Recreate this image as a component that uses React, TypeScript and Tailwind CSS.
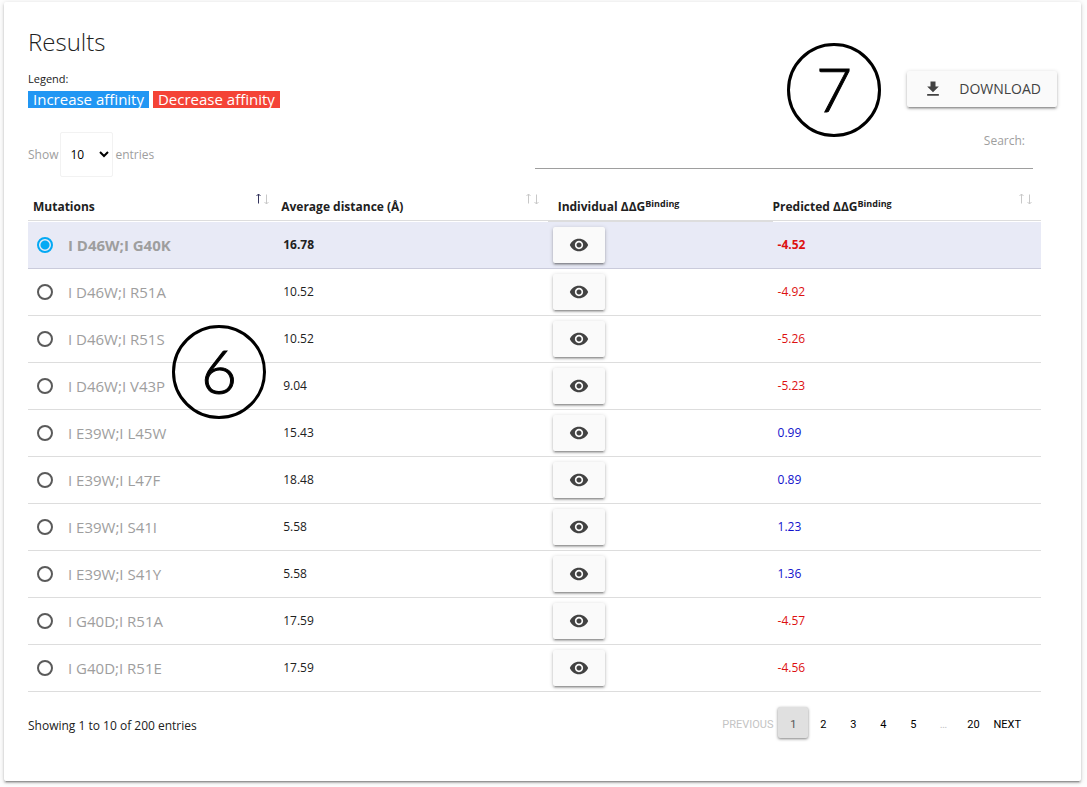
import { useState } from "react";
import { MdRemoveRedEye } from "react-icons/md";

interface Row { name: string; distance: string; predicted: number }

const rows: Row[] = [
  { name: "I D46W;I G40K", distance: "16.78", predicted: -4.52 },
  { name: "I D46W;I R51A", distance: "10.52", predicted: -4.92 },
  { name: "I D46W;I R51S", distance: "10.52", predicted: -5.26 },
  { name: "I D46W;I V43P", distance: "9.04", predicted: -5.23 },
  { name: "I E39W;I L45W", distance: "15.43", predicted: 0.99 },
  { name: "I E39W;I L47F", distance: "18.48", predicted: 0.89 },
  { name: "I E39W;I S41I", distance: "5.58", predicted: 1.23 },
  { name: "I E39W;I S41Y", distance: "5.58", predicted: 1.36 },
  { name: "I G40D;I R51A", distance: "17.59", predicted: -4.57 },
  { name: "I G40D;I R51E", distance: "17.59", predicted: -4.56 },
];

const pages = ["1", "2", "3", "4", "5", "…", "20"];
const raised = "rounded-[2px] bg-[#fafafa] text-[#424242] shadow-[0_2px_2px_0_rgba(0,0,0,0.18),0_3px_1px_-2px_rgba(0,0,0,0.16),0_1px_4px_0_rgba(0,0,0,0.2)]";
const head = "relative border-b border-white pb-[6px] shadow-[inset_0_-1px_#dddddd]";

function SortArrows({ asc }: { asc?: boolean }) {
  return (
    <svg viewBox="0 0 14 12" className="absolute right-[9px] top-[16px] h-3 w-[14px]" fill="none">
      <path d="M3.5 10.5V1M1.5 3 3.5 1l2 2" stroke={asc ? "#33335c" : "#c8c8c8"} />
      <path d="M11.5 1.5V11M9.5 9l2 2 2-2" stroke="#c8c8c8" />
    </svg>
  );
}

function Marker({ n, className }: { n: string; className: string }) {
  return (
    <div className={`pointer-events-none absolute flex h-[94px] w-[94px] items-center justify-center rounded-full border-[3px] border-black pb-[5px] font-['Lato'] text-[62px] font-light leading-none text-black [-webkit-text-stroke:1px_black] ${className}`}>
      {n}
    </div>
  );
}

export default function App() {
  const [selected, setSelected] = useState(0);
  const [page, setPage] = useState("1");
  const [length, setLength] = useState("10");
  const [q, setQ] = useState("");

  return (
    <div className="bg-[#fdfdfd] pb-[6px] pl-1 pr-[6px] pt-[2px] font-['Open_Sans',sans-serif] text-xs text-[#212121]">
      <main className="relative rounded-[2px] bg-white pb-[43px] pl-6 pr-6 pt-6 shadow-[0_2px_2px_0_rgba(0,0,0,0.2),0_3px_1px_-2px_rgba(0,0,0,0.2),0_1px_5px_0_rgba(0,0,0,0.16)]">
        <h1 className="text-2xl font-light leading-8">Results</h1>

        <div className="mt-[13px] flex items-start justify-between">
          <div>
            <p className="text-[11px] leading-4">Legend:</p>
            <div className="mt-1 flex gap-1 text-[15px] leading-[17px] text-white">
              <span className="bg-[#2196f3] px-[5px]">Increase affinity</span>
              <span className="bg-[#f44336] px-[5px]">Decrease affinity</span>
            </div>
          </div>
          <button type="button" className={`flex h-9 items-center gap-4 px-4 text-sm ${raised}`}>
            <svg viewBox="0 0 24 24" className="h-5 w-5" fill="currentColor">
              <path d="M19 9h-4V3H9v6H5l7 7 7-7zM5 18v2h14v-2H5z" />
            </svg>
            DOWNLOAD
          </button>
        </div>

        <div className="mr-4">
          <div className="mt-6 flex items-start justify-between text-[#9e9e9e]">
            <label className="flex items-center gap-[2px]">
              Show
              <select value={length} onChange={e => setLength(e.target.value)} className="h-[45px] w-[53px] rounded-[2px] border border-[#f2f2f2] bg-white p-[5px] text-black">
                <option>10</option><option>25</option><option>50</option><option>100</option>
              </select>
              entries
            </label>
            <label className="mr-2 w-1/2 max-w-[498px]">
              <span className="block pr-2 text-right leading-[18px]">Search:</span>
              <input type="search" value={q} onChange={e => setQ(e.target.value)} className="block h-[19px] w-full border-b border-[#9e9e9e] bg-transparent text-black outline-none" />
            </label>
          </div>

          <table className="w-full table-fixed border-separate border-spacing-0 text-left">
            <colgroup>
              <col className="w-[24.7%]" />
              <col className="w-[26.6%]" />
              <col className="w-[22.2%]" />
              <col />
            </colgroup>
            <thead>
              <tr className="h-[45px] align-bottom">
                <th className={`${head} pl-[5px]`}>Mutations<SortArrows asc /></th>
                <th className={`${head} pl-[3px]`}>Average distance (Å)<SortArrows /></th>
                <th className="border-b-2 border-[#dddddd] pb-[5px] pl-[10px]">Individual ΔΔG<sup className="text-[9px]">Binding</sup></th>
                <th className={head}>Predicted ΔΔG<sup className="text-[9px]">Binding</sup><SortArrows /></th>
              </tr>
            </thead>
            <tbody>
              {rows.map((r, i) => {
                const on = i === selected;
                const cell = on ? "border-b border-[#cacbdb] pl-[5px]" : "border-b border-[#dddddd] pl-[5px]";
                return (
                  <tr key={r.name} className={on ? "h-[47px] bg-[#e8eaf6] font-bold" : "h-[47px]"}>
                    <td className={cell}>
                      <label className="ml-1 flex items-center gap-[15px] text-[15px] text-[#9e9e9e]">
                        <input type="radio" name="mutation" checked={on} onChange={() => setSelected(i)} className="h-4 w-4 shrink-0 appearance-none rounded-full border-2 border-[#5a5a5a] checked:border-[#03a9f4] checked:bg-[radial-gradient(#03a9f4_0_4px,transparent_5px)]" />
                        {r.name}
                      </label>
                    </td>
                    <td className={cell}>{r.distance}</td>
                    <td className={cell}>
                      <button type="button" aria-label={`View ${r.name}`} className={`flex h-9 w-[52px] items-center justify-center ${raised}`}>
                        <MdRemoveRedEye className="h-5 w-5" />
                      </button>
                    </td>
                    <td className={cell}>
                      <span className={r.predicted < 0 ? "text-[#dd1111]" : "text-[#1111cc]"}>{r.predicted.toFixed(2)}</span>
                    </td>
                  </tr>
                );
              })}
            </tbody>
          </table>

          <div className="mt-[15px] flex items-center justify-between">
            <p className="pt-[6px]">Showing 1 to 10 of 200 entries</p>
            <nav className="mr-[15px] flex font-['Roboto'] text-[11px] text-black">
              <button type="button" disabled className="px-[5px] pt-[5px] text-[#c4c4c4]">PREVIOUS</button>
              {pages.map(p => p === "…" ? (
                <span key={p} className="flex h-[31px] w-[30px] items-center justify-center pt-[5px] text-[#c4c4c4]">{p}</span>
              ) : (
                <button key={p} type="button" onClick={() => setPage(p)} className={p === page ? "h-[31px] w-[30px] rounded-[2px] bg-[#e0e0e0] pt-[5px] text-[#555555] shadow-[0_1px_3px_rgba(0,0,0,0.5)]" : "h-[31px] w-[30px] pt-[5px]"}>{p}</button>
              ))}
              <button type="button" className="px-[5px] pt-[5px]">NEXT</button>
            </nav>
          </div>
        </div>

        <Marker n="6" className="left-[168px] top-[323px]" />
        <Marker n="7" className="right-[200px] top-[41px]" />
      </main>
    </div>
  );
}
